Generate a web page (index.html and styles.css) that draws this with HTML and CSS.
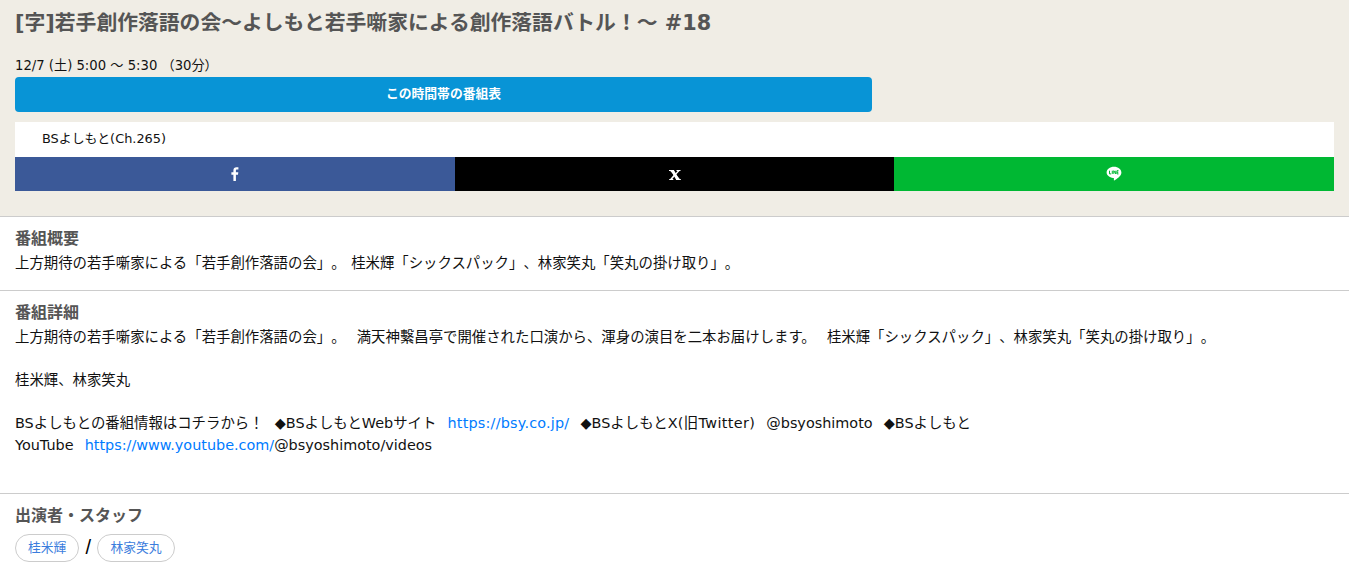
FILE: index.html
```html
<!DOCTYPE html>
<html lang="ja">
<head>
<meta charset="utf-8">
<title>番組詳細</title>
<link rel="stylesheet" href="styles.css">
</head>
<body>
<header class="head">
  <h1 class="title">[字]若手創作落語の会～よしもと若手噺家による創作落語バトル！～ #18</h1>
  <p class="date">12/7 (土) 5:00 ～ 5:30 （30分）</p>
  <a class="timetable" href="#">この時間帯の番組表</a>
  <div class="channel">BSよしもと(Ch.265)</div>
  <div class="share">
    <a class="share-item fb" href="#" aria-label="Facebook"><svg width="8" height="14" viewBox="0 0 8 14"><path fill="#fff" d="M2.4 14V7.700H.4V5.200h2V3.400C2.400 1.300 3.600.2 5.500.2c.9 0 1.700.1 1.900.1v2.200H6.100c-1 0-1.200.5-1.200 1.200v1.500h2.400l-.3 2.500H4.900V14z"/></svg></a>
    <a class="share-item x" href="#" aria-label="X"><svg width="12" height="12" viewBox="0 0 12 12"><path fill="#fff" d="M0 2h5v1H4l2.200 2.700L8.500 3h-1V2h4v1h-1L7 6.700 10.800 11h1v1H7v-1h1L5.700 8.300 3.300 11h1v1H.2v-1h1l3.600-4.200L1.200 3H0z"/><path fill="#fff" d="M1.800 2.500h3.400l5.200 9H7z"/></svg></a>
    <a class="share-item line" href="#" aria-label="LINE"><svg width="16" height="16" viewBox="0 0 16 16"><path fill="#fff" d="M8 .7c4.100 0 7.400 2.600 7.400 5.800 0 1.400-.6 2.600-1.700 3.800-1.600 1.800-4.800 4-5.400 4.200-.6.200-.5-.3-.4-.9l.1-.8c0-.2 0-.5-.2-.6-.2-.1-.5-.1-.7-.2C3.500 11.500.6 9.300.6 6.500.6 3.300 3.900.7 8 .7z"/><path fill="none" stroke="#00b833" stroke-width="1" d="M3.500 4.700v3.200h1.700M6.300 4.700v3.200M7.800 7.900V4.700l2 3.200V4.700M12.500 4.700h-1.500v3.200h1.500M11 6.300h1.300"/></svg></a>
  </div>
</header>
<section class="block">
  <h2 class="heading">番組概要</h2>
  <p class="text">上方期待の若手噺家による「若手創作落語の会」。 桂米輝「シックスパック」、林家笑丸「笑丸の掛け取り」。</p>
</section>
<section class="block detail">
  <h2 class="heading">番組詳細</h2>
  <p class="text">上方期待の若手噺家による「若手創作落語の会」。 &nbsp;満天神繫昌亭で開催された口演から、渾身の演目を二本お届けします。 &nbsp;桂米輝「シックスパック」、林家笑丸「笑丸の掛け取り」。<br><br>桂米輝、林家笑丸<br><br>BSよしもとの番組情報はコチラから！ &nbsp;◆BSよしもとWebサイト &nbsp;<a class="url" href="#">https://bsy.co.jp/</a> &nbsp;◆BSよしもと<span class="wide">X(旧Twitter)</span> &nbsp;@bsyoshimoto &nbsp;◆BSよしもと<br>YouTube &nbsp;<a href="#">https://www.youtube.com/</a>@bsyoshimoto/videos</p>
</section>
<section class="block cast">
  <h2 class="heading">出演者・スタッフ</h2>
  <div class="tags"><a class="tag" href="#">桂米輝</a><span class="slash">/</span><a class="tag" href="#">林家笑丸</a></div>
</section>
</body>
</html>
```
FILE: styles.css
```css
* { box-sizing: border-box; }
html, body { margin: 0; padding: 0; }
body {
  width: 1349px;
  height: 566px;
  overflow: hidden;
  background: #fff;
  color: #111;
  font-family: "DejaVu Sans", "Noto Sans CJK JP", sans-serif;
  font-size: 14.4px;
  text-spacing-trim: space-all;
}
a { color: #007bff; text-decoration: none; }
.head {
  height: 216px;
  padding: 9px 15px 25px;
  background: #f0ede5;
}
.title {
  margin: 0;
  color: #555;
  font-size: 20.8px;
  font-weight: 700;
  line-height: 29px;
}
.date {
  margin: 18px 0 0;
  font-size: 13.2px;
  line-height: 19px;
}
.timetable {
  display: block;
  width: 857px;
  height: 35px;
  margin-top: 2px;
  border-radius: 4px;
  background: #0894d6;
  color: #fff;
  font-size: 12.8px;
  font-weight: 700;
  line-height: 33px;
  text-align: center;
}
.channel {
  height: 35px;
  margin-top: 10px;
  padding-left: 27px;
  background: #fff;
  font-size: 12.9px;
  line-height: 34px;
}
.share { display: flex; height: 34px; }
.share-item {
  flex: 1;
  display: flex;
  align-items: center;
  justify-content: center;
}
.fb { background: #3b5998; }
.x { background: #000; }
.line { background: #00b833; }
.block {
  height: 74px;
  padding: 11px 15px 0;
  border-top: 1px solid #ccc;
}
.block.detail { height: 203px; }
.heading {
  margin: 0;
  color: #555;
  font-size: 16px;
  font-weight: 700;
  line-height: 22px;
}
.text {
  margin: 3px 0 0;
  line-height: 21.6px;
  word-spacing: 1px;
}
.url { letter-spacing: .2px; }
.wide { letter-spacing: .35px; }
.tags { display: flex; align-items: center; margin-top: 7px; }
.tag {
  height: 28px;
  padding: 0 12px;
  border: 1px solid #ccc;
  border-radius: 14px;
  color: #3b7ddd;
  font-size: 12.8px;
  line-height: 26px;
}
.slash {
  width: 18px;
  margin-top: -3px;
  color: #000;
  font-family: "Liberation Sans", sans-serif;
  font-size: 20px;
  line-height: 24px;
  text-align: center;
}
```
